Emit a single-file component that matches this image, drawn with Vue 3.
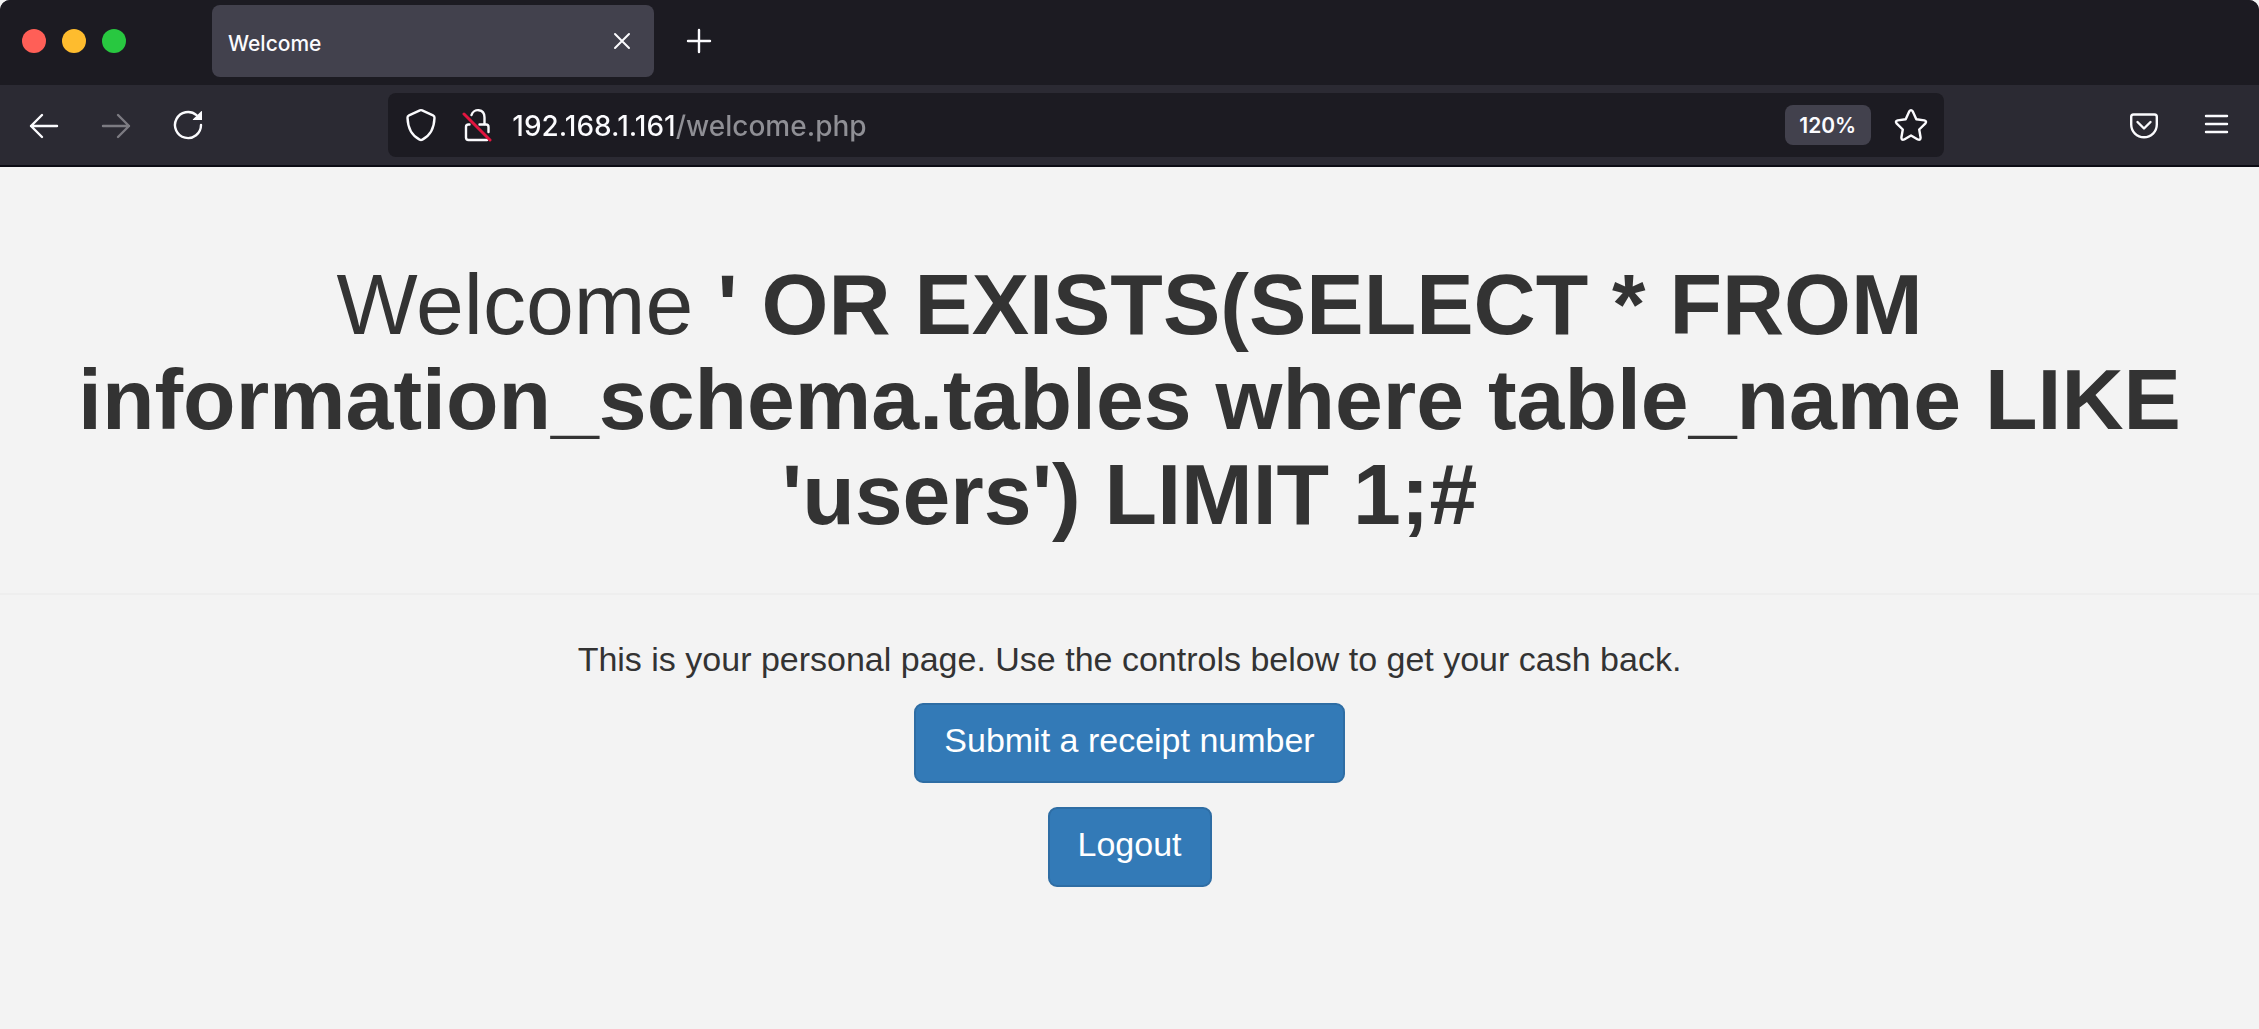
<script setup>
import { ref } from 'vue'

const address = ref('192.168.1.161/welcome.php')
const username = "' OR EXISTS(SELECT * FROM information_schema.tables where table_name LIKE 'users') LIMIT 1;#"
</script>

<template>
  <div class="window">
    <header class="chrome">
      <div class="tab-strip">
        <div class="lights">
          <button class="light red" type="button" aria-label="Close window"></button>
          <button class="light yellow" type="button" aria-label="Minimise window"></button>
          <button class="light green" type="button" aria-label="Zoom window"></button>
        </div>
        <div class="tab">
          <span class="tab-title">Welcome</span>
          <button class="tab-close" type="button" aria-label="Close tab">
            <svg width="18" height="18" viewBox="0 0 18 18"><path d="M2 2 16 16M16 2 2 16" /></svg>
          </button>
        </div>
        <button class="new-tab" type="button" aria-label="New tab">
          <svg width="26" height="26" viewBox="0 0 26 26"><path d="M13 2V24M2 13H24" /></svg>
        </button>
      </div>

      <div class="toolbar">
        <button class="tool" type="button" aria-label="Back">
          <svg width="32" height="32" viewBox="0 0 32 32"><path d="M29 17H3M14 6 3 17 14 28" /></svg>
        </button>
        <button class="tool" type="button" aria-label="Forward" disabled>
          <svg width="32" height="32" viewBox="0 0 32 32"><path d="M3 17H29M18 6 29 17 18 28" /></svg>
        </button>
        <button class="tool" type="button" aria-label="Reload">
          <svg width="32" height="32" viewBox="0 0 32 32">
            <path d="M29 16A13 13 0 1 1 24.5 6.2" />
            <path class="solid" d="M29.2 2.2C29.7 1.7 30 2 30 2.6V11H21.4C20.8 11 20.6 10.6 21 10.2Z" />
          </svg>
        </button>
        <div class="spacer"></div>
        <div class="url-bar">
          <button class="url-icon" type="button" aria-label="Tracking protection">
            <svg width="32" height="34" viewBox="0 0 32 34">
              <path d="M14.9 2.4Q16 1.9 17.1 2.4L28 7.3Q29.6 8 29.5 9.8C29.2 19 26.5 27 17.4 31.6Q16 32.3 14.6 31.6C5.5 27 2.8 19 2.5 9.8Q2.4 8 4 7.3Z" />
            </svg>
          </button>
          <button class="url-icon lock" type="button" aria-label="Connection not secure">
            <svg width="32" height="34" viewBox="0 0 32 34">
              <path d="M10.5 7C12.5 .2 23.5 .2 23.5 9.5V16" />
              <path d="M8.5 16.5H7.5Q5 16.5 5 19V29.5Q5 32 7.5 32H26M18.5 16.5H25Q27.5 16.5 27.5 19V24" />
              <path class="slash" d="M3 6 29 32" />
            </svg>
          </button>
          <input v-model="address" class="address" type="text" aria-label="Address" spellcheck="false" />
          <button class="zoom" type="button">120%</button>
          <button class="star" type="button" aria-label="Bookmark this page">
            <svg width="34" height="34" viewBox="0 0 34 34">
              <path d="M15.2 3.5Q17 .8 18.8 3.5L22.3 11.3L30.3 12.4Q33.3 13.2 31.2 15.7L25.2 21.5L26.6 29.5Q26.7 32.6 23.8 31.5L17 27.5L10.2 31.5Q7.3 32.6 7.4 29.5L8.8 21.5L2.8 15.7Q.7 13.2 3.7 12.4L11.7 11.3Z" />
            </svg>
          </button>
        </div>
        <div class="spacer"></div>
        <button class="tool" type="button" aria-label="Save to Pocket">
          <svg width="32" height="32" viewBox="0 0 32 32">
            <path d="M5.5 5.5H26.5Q28.8 5.5 28.8 7.8V15.5A12.8 12.8 0 0 1 3.2 15.5V7.8Q3.2 5.5 5.5 5.5Z" />
            <path d="M9.5 13 16 19.5 22.5 13" />
          </svg>
        </button>
        <button class="tool" type="button" aria-label="Open application menu">
          <svg width="32" height="32" viewBox="0 0 32 32"><path d="M6 7H27M6 15H27M6 23H27" /></svg>
        </button>
      </div>
    </header>

    <main class="page">
      <div class="page-header">
        <h1>Welcome <b>{{ username }}</b></h1>
      </div>
      <p>This is your personal page. Use the controls below to get your cash back.</p>
      <div class="actions">
        <a class="btn" href="#receipt">Submit a receipt number</a>
        <a class="btn" href="#logout">Logout</a>
      </div>
    </main>
  </div>
</template>

<style>
html,
body {
  background: #f3f3f3;
}
</style>

<style scoped>
* {
  box-sizing: border-box;
}

button {
  display: flex;
  align-items: center;
  justify-content: center;
  padding: 0;
  border: 0;
  background: none;
  font: inherit;
  color: inherit;
}

svg {
  display: block;
  flex: none;
  fill: none;
  stroke: currentColor;
  stroke-width: 2.4;
  stroke-linecap: round;
  stroke-linejoin: round;
}

.solid {
  fill: currentColor;
  stroke: none;
}

.slash {
  stroke: #e2153f;
  stroke-width: 3;
}

.chrome {
  overflow: hidden;
  border-bottom: 2px solid #0c0c14;
  border-radius: 10px 10px 0 0;
  background: #2b2a33;
  color: #fbfbfe;
  font-family: Inter, "Liberation Sans", sans-serif;
}

.tab-strip {
  display: flex;
  align-items: center;
  height: 85px;
  padding: 0 22px 3px;
  background: #1c1b22;
}

.lights {
  display: flex;
  gap: 16px;
  width: 190px;
}

.light {
  width: 24px;
  height: 24px;
  border-radius: 50%;
}

.red {
  background: #ff5f57;
}

.yellow {
  background: #febc2e;
}

.green {
  background: #28c840;
}

.tab {
  display: flex;
  align-items: center;
  justify-content: space-between;
  width: 442px;
  height: 72px;
  padding: 0 23px 0 16px;
  border-radius: 8px;
  background: #42414d;
  font-size: 21px;
  font-weight: 500;
}

.tab-title {
  padding-top: 4px;
}

.tab-close svg {
  stroke-width: 2;
}

.new-tab {
  width: 90px;
  height: 64px;
}

.toolbar {
  display: flex;
  align-items: center;
  height: 80px;
  padding: 0 7px 0 8px;
}

.tool {
  flex: none;
  width: 72px;
  height: 64px;
}

.tool:disabled {
  color: #7c7b82;
}

.spacer {
  flex: 11;
}

.url-bar {
  display: flex;
  flex: 102;
  align-items: center;
  height: 64px;
  padding: 0 16px;
  border-radius: 8px;
  background: #1c1b22;
}

.url-icon {
  width: 34px;
}

.lock {
  margin: 0 18px 0 22px;
}

/* The host part of the address is bright, the path is dimmed. */
.address {
  flex: 1;
  min-width: 0;
  height: 50px;
  padding: 2px 0 0;
  border: 0;
  outline: 0;
  background: linear-gradient(90deg, #fbfbfe 164px, #8f8f95 164px);
  background-clip: text;
  color: transparent;
  font: 500 28px Inter, "Liberation Sans", sans-serif;
}

.zoom {
  width: 86px;
  height: 40px;
  margin-right: 23px;
  border-radius: 8px;
  background: #42414d;
  font-size: 21px;
  font-weight: 600;
}

.page {
  padding-top: 90px;
  color: #333;
  font: 34px/48px "Liberation Sans", Arial, sans-serif;
  text-align: center;
}

.page-header {
  padding: 0 36px 51px;
  border-bottom: 2px solid #eee;
}

h1 {
  margin: 0;
  font-size: 86px;
  font-weight: 400;
  line-height: 95px;
}

p {
  margin: 40px 0 20px;
}

.actions {
  display: flex;
  flex-direction: column;
  align-items: center;
  gap: 24px;
}

.btn {
  padding: 11px 28px 17px;
  border: 2px solid #2e6da4;
  border-radius: 9px;
  background: #337ab7;
  color: #fff;
  text-decoration: none;
}
</style>
